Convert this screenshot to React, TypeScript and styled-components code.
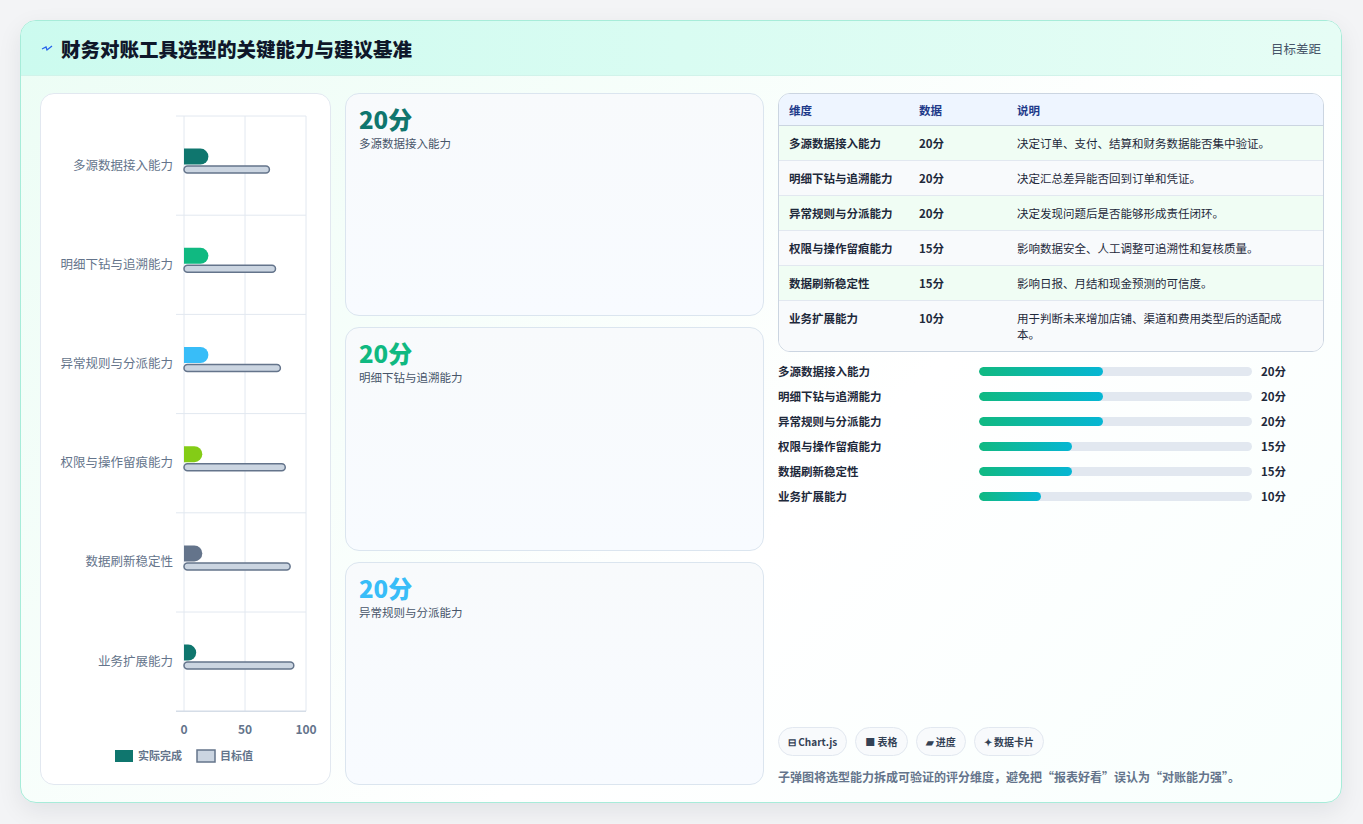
import React from "react";
import styled, { createGlobalStyle } from "styled-components";

const Global = createGlobalStyle`
  html, body { margin: 0; padding: 0; background: #f3f4f6; }
  body { font-family: "Noto Sans CJK SC", "Noto Sans", sans-serif; }
  * { box-sizing: border-box; }
`;

const Page = styled.div`
  width: 1363px; height: 824px; padding: 20px 21px 21px 20px;
`;
const Card = styled.div`
  height: 783px; border: 1px solid #a7ecd9; border-radius: 16px; overflow: hidden;
  background: linear-gradient(135deg, #ecfdf5 0%, #ffffff 60%, #f8fffd 100%);
  box-shadow: 0 8px 24px rgba(15, 23, 42, 0.08);
  display: flex; flex-direction: column;
`;
const Header = styled.div`
  height: 55px; flex: none; display: flex; align-items: center; justify-content: space-between;
  padding: 0 20px; background: linear-gradient(90deg, #ccfbef, #e6fdf5);
  border-bottom: 1px solid #d1f3ea;
`;
const Title = styled.h1`
  margin: 0; font-size: 19.5px; font-weight: 800; color: #0f172a; display: flex; align-items: center; gap: 8px;
`;
const HeadRight = styled.span` font-size: 12.5px; color: #475569; `;
const Body = styled.div`
  flex: 1; display: grid; grid-template-columns: 291px 419px 546px; gap: 14px;
  padding: 17px 19px 18px 19px;
`;
const Panel = styled.div`
  background: #fff; border: 1px solid #e2e8f0; border-radius: 14px;
`;
const Col = styled.div` display: flex; flex-direction: column; gap: 11px; `;
const Metric = styled.div`
  flex: 1; background: linear-gradient(180deg, #f8fafc, #f8fbff); border: 1px solid #dbe5ef;
  border-radius: 14px; padding: 10px 13px;
`;
const Value = styled.div<{ c: string }>` font-size: 24px; font-weight: 800; color: ${p => p.c}; line-height: 30px; `;
const MetricLabel = styled.div` font-size: 11.5px; color: #475569; margin-top: 1px; `;
const Right = styled.div` display: flex; flex-direction: column; `;
const Table = styled.table`
  width: 100%; border-collapse: separate; border-spacing: 0; border: 1px solid #cbd5e1; border-radius: 12px; overflow: hidden;
  font-size: 11.5px; color: #1e293b; background: #fff; table-layout: fixed;
  th { background: #eef5ff; color: #1e3a8a; font-weight: 700; text-align: left; height: 32px; padding: 0 10px; border-bottom: 1px solid #cbd5e1; }
  td { padding: 9px 10px; border-bottom: 1px solid #e2e8f0; vertical-align: top; line-height: 16px; }
  td:nth-child(3) { padding-right: 26px; }
  tr:last-child td { border-bottom: none; }
  td:first-child { font-weight: 600; }
  td:nth-child(2) { font-weight: 600; }
`;
const Row = styled.tr<{ alt: boolean }>` background: ${p => (p.alt ? "#f8fafc" : "#f0fdf4")}; `;
const Progress = styled.div` display: flex; flex-direction: column; gap: 9px; margin-top: 11px; `;
const PRow = styled.div`
  display: grid; grid-template-columns: 192px 273px 1fr; align-items: center; column-gap: 9px;
  font-size: 11.5px; font-weight: 600; color: #1e293b; height: 16px;
`;
const Track = styled.div` height: 9px; border-radius: 5px; background: #e2e8f0; overflow: hidden; `;
const Fill = styled.div` height: 100%; border-radius: 5px; background: linear-gradient(90deg, #10b981, #06b6d4); `;
const Spacer = styled.div` flex: 1; `;
const Chips = styled.div` display: flex; gap: 8px; `;
const Chip = styled.span`
  height: 29px; padding: 0 9px; border: 1px solid #e2e8f0; border-radius: 15px; background: #f8fafc;
  display: inline-flex; align-items: center; gap: 4px; font-size: 10px; font-weight: 700; color: #334155;
`;
const Note = styled.p` margin: 12px 0 0; font-size: 12px; color: #64748b; font-weight: 600; `;

const cats = [
  { n: "多源数据接入能力", v: 20, t: 70, c: "#0f766e", d: "决定订单、支付、结算和财务数据能否集中验证。" },
  { n: "明细下钻与追溯能力", v: 20, t: 75, c: "#10b981", d: "决定汇总差异能否回到订单和凭证。" },
  { n: "异常规则与分派能力", v: 20, t: 79, c: "#38bdf8", d: "决定发现问题后是否能够形成责任闭环。" },
  { n: "权限与操作留痕能力", v: 15, t: 83, c: "#84cc16", d: "影响数据安全、人工调整可追溯性和复核质量。" },
  { n: "数据刷新稳定性", v: 15, t: 87, c: "#64748b", d: "影响日报、月结和现金预测的可信度。" },
  { n: "业务扩展能力", v: 10, t: 90, c: "#0f766e", d: "用于判断未来增加店铺、渠道和费用类型后的适配成本。" },
];

function Chart() {
  const x0 = 143, w = 122, top = 22, rh = 99.2;
  const sx = (v: number) => (v / 100) * w;
  return (
    <svg width="289" height="690" style={{ display: "block" }} fontFamily='"Noto Sans CJK SC", sans-serif'>
      {[0, 50, 100].map(v => (
        <line key={v} x1={x0 + sx(v)} x2={x0 + sx(v)} y1={top} y2={top + rh * 6} stroke="#e2e8f0" />
      ))}
      {Array.from({ length: 7 }).map((_, i) => (
        <line key={i} x1={x0 - 8} x2={x0 + w} y1={top + rh * i} y2={top + rh * i} stroke="#e2e8f0" />
      ))}
      <line x1={x0 - 8} x2={x0 + w} y1={top + rh * 6} y2={top + rh * 6} stroke="#cbd5e1" />
      {cats.map((c, i) => {
        const cy = top + rh * i + rh / 2;
        const aw = sx(c.v);
        return (
          <g key={i}>
            <text x={132} y={cy + 4} textAnchor="end" fontSize="12.5" fill="#64748b">{c.n}</text>
            <path d={`M${x0} ${cy - 17} H${x0 + aw - 8} A8 8 0 0 1 ${x0 + aw} ${cy - 9} V${cy - 9} A8 8 0 0 1 ${x0 + aw - 8} ${cy - 1} H${x0} Z`} fill={c.c} />
            <rect x={x0} y={cy + 0.5} width={sx(c.t)} height={7} rx={3.5} fill="#cbd5e1" stroke="#64748b" strokeWidth="1.5" />
          </g>
        );
      })}
      {[0, 50, 100].map(v => (
        <text key={v} x={x0 + sx(v)} y={640} textAnchor="middle" fontSize="12" fontWeight="700" fill="#64748b">{v}</text>
      ))}
      <rect x={74} y={656} width={18} height={12} fill="#0f766e" />
      <text x={97} y={666} fontSize="11" fontWeight="700" fill="#64748b">实际完成</text>
      <rect x={156} y={656} width={18} height={12} fill="#cbd5e1" stroke="#64748b" strokeWidth="1.5" />
      <text x={179} y={666} fontSize="11" fontWeight="700" fill="#64748b">目标值</text>
    </svg>
  );
}

export default function App() {
  return (
    <Page>
      <Global />
      <Card>
        <Header>
          <Title>
            <svg width="12" height="10" viewBox="0 0 12 10"><path d="M1 6 L5 4 L6 7 L11 3" stroke="#2563eb" strokeWidth="1.3" fill="none" /></svg>
            财务对账工具选型的关键能力与建议基准
          </Title>
          <HeadRight>目标差距</HeadRight>
        </Header>
        <Body>
          <Panel><Chart /></Panel>
          <Col>
            {cats.slice(0, 3).map(c => (
              <Metric key={c.n}>
                <Value c={c.c}>{c.v}分</Value>
                <MetricLabel>{c.n}</MetricLabel>
              </Metric>
            ))}
          </Col>
          <Right>
            <Table>
              <thead>
                <tr><th style={{ width: 130 }}>维度</th><th style={{ width: 98 }}>数据</th><th>说明</th></tr>
              </thead>
              <tbody>
                {cats.map((c, i) => (
                  <Row key={c.n} alt={i % 2 === 1}>
                    <td>{c.n}</td><td>{c.v}分</td><td>{c.d}</td>
                  </Row>
                ))}
              </tbody>
            </Table>
            <Progress>
              {cats.map(c => (
                <PRow key={c.n}>
                  <span>{c.n}</span>
                  <Track><Fill style={{ width: `${c.v * 2.27}%` }} /></Track>
                  <span>{c.v}分</span>
                </PRow>
              ))}
            </Progress>
            <Spacer />
            <Chips>
              <Chip>⊟ Chart.js</Chip>
              <Chip>■ 表格</Chip>
              <Chip>▰ 进度</Chip>
              <Chip>✦ 数据卡片</Chip>
            </Chips>
            <Note>子弹图将选型能力拆成可验证的评分维度，避免把“报表好看”误认为“对账能力强”。</Note>
          </Right>
        </Body>
      </Card>
    </Page>
  );
}
